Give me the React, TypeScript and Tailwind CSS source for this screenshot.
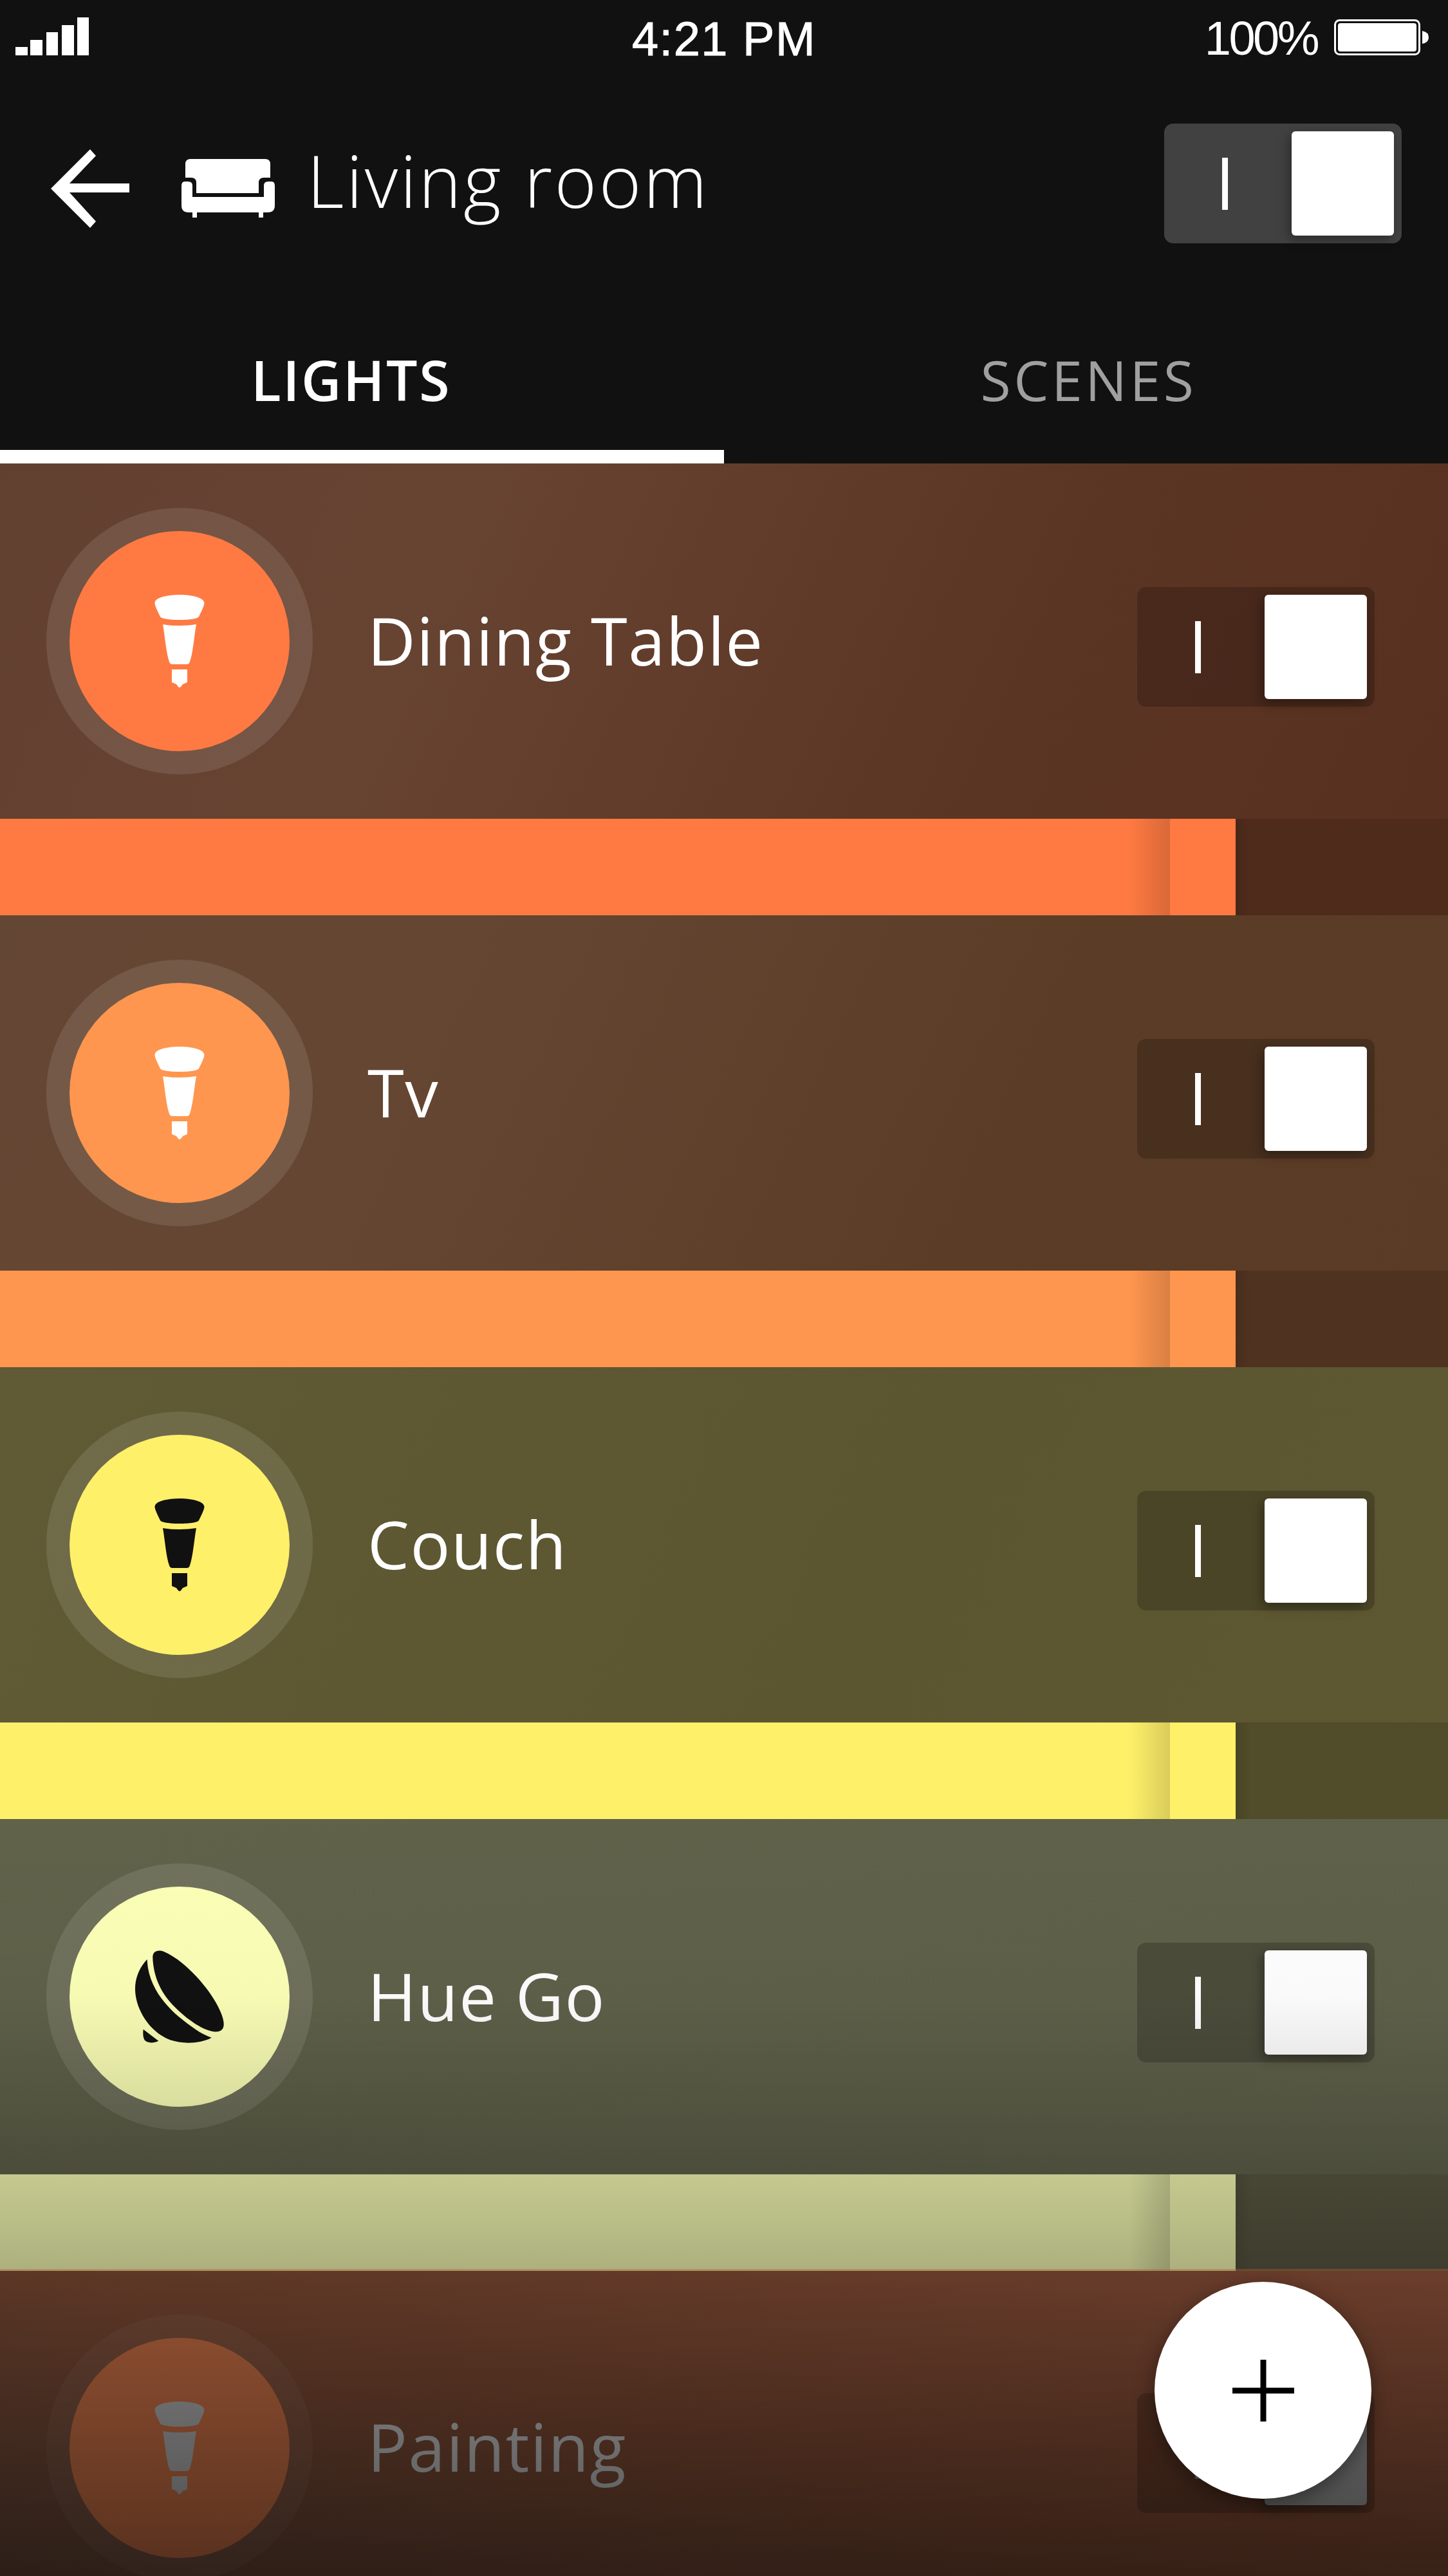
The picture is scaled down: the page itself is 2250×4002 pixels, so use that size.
const rows = [
  {
    name: "Dining Table",
    rowBg: "bg-[linear-gradient(115deg,#62402f,#674332_30%,#5b3524_70%,#583020)]",
    bar: "bg-[#ff7a42]",
    barBack: "bg-[#4f2b1c]",
    circle: "bg-[#ff7a42]",
    icon: "bulb",
    iconFill: "#ffffff",
  },
  {
    name: "Tv",
    rowBg: "bg-[linear-gradient(115deg,#644634,#654632_30%,#5b3c27_70%,#5a3b26)]",
    bar: "bg-[#ff964f]",
    barBack: "bg-[#503220]",
    circle: "bg-[#ff964f]",
    icon: "bulb",
    iconFill: "#ffffff",
  },
  {
    name: "Couch",
    rowBg: "bg-[linear-gradient(115deg,#605a35,#5c5630_60%,#5e5832)]",
    bar: "bg-[#fff06a]",
    barBack: "bg-[#514c29]",
    circle: "bg-[#fff06a]",
    icon: "bulb",
    iconFill: "#111111",
  },
  {
    name: "Hue Go",
    rowBg: "bg-[linear-gradient(170deg,#60624a,#5e6049_60%,#60624c)]",
    bar: "bg-[#f8fdb4]",
    barBack: "bg-[#5a5842]",
    circle: "bg-[#fbffb6]",
    icon: "go",
    iconFill: "#111111",
  },
];

function Bulb({ fill }: { fill: string }) {
  return (
    <svg width="78" height="144" viewBox="0 0 78 144" fill={fill}>
      <path d="M0.5 13C0.5 5 18 0 39 0S77.5 5 77.5 13C77.5 17 72 28 69 34C68 37 55 39 39 39S10 37 9 34C6 28 0.5 17 0.5 13Z" />
      <path d="M13 46Q39 50 65 46C62 62 60 90 55 104Q54 108 50 108H28Q24 108 23 104C18 90 16 62 13 46Z" />
      <path d="M27 116H51V136L44 139L41 143Q39 145 37 143L34 139L27 136Z" />
    </svg>
  );
}

function HueGo({ fill }: { fill: string }) {
  return (
    <svg width="138" height="144" viewBox="456 450 414 432" fill={fill}>
      <path d="M538 485C536 455 560 445 590 456C660 485 745 565 805 650C850 715 875 775 868 805C862 835 825 835 785 818C730 795 660 740 610 680C565 625 540 555 538 485Z" />
      <path d="M512 492C475 530 456 580 456 630C456 720 520 830 620 868C680 888 760 885 812 857C760 840 710 800 660 760C590 700 515 610 512 492Z" />
      <path d="M494 818L565 872C540 885 510 882 500 868C492 855 492 835 494 818Z" />
    </svg>
  );
}

function Toggle({ track, mark, knob }: { track: string; mark: string; knob: string }) {
  return (
    <div className={`relative flex items-center w-[369px] h-[186px] rounded-[14px] pl-[90px] ${track}`}>
      <div className={`w-[9px] h-[81px] ${mark}`} />
      <div className={`absolute right-[12px] top-[12px] w-[159px] h-[162px] rounded-[6px] shadow-[-4px_6px_18px_rgba(0,0,0,0.35)] ${knob}`} />
    </div>
  );
}

function LightRow({ row }: { row: (typeof rows)[number] }) {
  return (
    <div className="shrink-0">
      <div className={`flex items-center h-[552px] pl-[72px] pr-[114px] ${row.rowBg}`}>
        <div className="flex items-center justify-center w-[414px] h-[414px] rounded-full bg-white/10">
          <div className={`flex items-center justify-center w-[342px] h-[342px] rounded-full ${row.circle}`}>
            {row.icon === "bulb" ? <Bulb fill={row.iconFill} /> : <HueGo fill={row.iconFill} />}
          </div>
        </div>
        <div className="flex-1 pl-[85px] pb-[4px] text-[103px] tracking-[1.6px] text-white">{row.name}</div>
        <div className="mt-[18px]">
          <Toggle track="bg-black/20" mark="bg-white" knob="bg-white" />
        </div>
      </div>
      <div className={`flex h-[150px] ${row.barBack}`}>
        <div className={`flex w-[1920px] ${row.bar}`}>
          <div className="flex-1" />
          <div className="w-[64px] bg-linear-to-r from-transparent to-black/15" />
          <div className="w-[102px]" />
        </div>
        <div className="w-[24px] bg-linear-to-r from-black/10 to-transparent" />
      </div>
    </div>
  );
}

export default function App() {
  return (
    <div className="relative flex flex-col w-[2250px] h-[4002px] overflow-hidden bg-[#111111] font-['Open_Sans',sans-serif]">
      {/* status bar */}
      <div className="relative flex shrink-0 items-center justify-between h-[110px] pl-[24px] pr-[30px] pt-[10px] text-white font-['Liberation_Sans',sans-serif] text-[74px] leading-none">
        <svg width="114" height="59" viewBox="0 0 114 59" fill="#fff" className="mt-[-7px]">
          <rect x="0" y="46" width="19" height="13" />
          <rect x="23" y="35" width="19" height="24" />
          <rect x="48" y="23" width="18" height="36" />
          <rect x="72" y="12" width="19" height="47" />
          <rect x="96" y="0" width="18" height="59" />
        </svg>
        <div className="absolute left-0 right-0 top-[24px] text-center tracking-[1.5px] [-webkit-text-stroke:1px_white]">4:21 PM</div>
        <div className="flex items-center gap-[26px] mt-[-4px]">
          <span className="mt-[4px] tracking-[-3.5px]">100%</span>
          <svg width="147" height="56" viewBox="0 0 147 56">
            <rect x="1.5" y="1.5" width="131" height="53" rx="7" fill="none" stroke="#fff" strokeWidth="3" />
            <rect x="6" y="6" width="122" height="44" rx="4" fill="#fff" />
            <path d="M137 18Q147 20 147 28T137 38Z" fill="#fff" />
          </svg>
        </div>
      </div>

      {/* title row */}
      <div className="flex shrink-0 items-center h-[350px] pl-[79px] pr-[72px] text-white">
        <svg width="122" height="122" viewBox="0 0 122 122" fill="#fff" className="mt-[16px]">
          <polygon points="0,61 61,0 70,10 29,53 122,53 122,67 29,67 70,112 61,122" />
        </svg>
        <svg width="145" height="91" viewBox="0 0 145 91" fill="#fff" className="ml-[81px] mt-[14px]">
          <path d="M14 0H130Q138 0 138 8V29H128Q120 29 120 37V53H23V37Q23 29 15 29H6V8Q6 0 14 0Z" />
          <path d="M5 35H10Q17 35 17 41V59H128V41Q128 35 135 35H140Q145 35 145 42V72Q145 83 134 83H11Q0 83 0 72V42Q0 35 5 35Z" />
          <rect x="17" y="83" width="7" height="8" />
          <rect x="120" y="83" width="7" height="8" />
        </svg>
        <div className="flex-1 pl-[50px] pb-[10px] text-[112px] font-light tracking-[3.5px] leading-none">Living room</div>
        <Toggle track="bg-[#414141]" mark="bg-white" knob="bg-white" />
      </div>

      {/* tabs */}
      <div className="flex shrink-0 h-[260px] text-[86px]">
        <div className="flex items-center justify-center w-[1125px] border-b-[21px] border-white pt-[20px] pr-[34px] font-semibold tracking-[2.5px] text-white">
          LIGHTS
        </div>
        <div className="flex items-center justify-center w-[1125px] pb-[1px] pl-[8px] tracking-[4.5px] text-[#a0a0a0]">
          SCENES
        </div>
      </div>

      {/* list */}
      <div className="flex flex-col shrink-0">
        {rows.map((row) => (
          <LightRow key={row.name} row={row} />
        ))}
        <div className="flex shrink-0 items-center h-[549px] -mt-[3px] box-content border-t-[3px] border-[rgba(255,140,85,0.4)] bg-clip-padding pl-[72px] pr-[114px] bg-[linear-gradient(195deg,#9a583f,#864f36_50%,#6b4c3d)]">
          <div className="flex items-center justify-center w-[414px] h-[414px] rounded-full bg-white/5">
            <div className="flex items-center justify-center w-[342px] h-[342px] rounded-full bg-[#d9784a]">
              <Bulb fill="#bdbdbd" />
            </div>
          </div>
          <div className="flex-1 pl-[85px] pb-[4px] text-[103px] tracking-[1.6px] text-[#d0d0d0]">Painting</div>
          <div className="mt-[16px]">
            <Toggle track="bg-black/20" mark="bg-[#aaaaaa]" knob="bg-[#a8a8a8]" />
          </div>
        </div>
      </div>

      {/* dim toward the bottom of the screen */}
      <div className="absolute left-0 right-0 top-[2826px] h-[1176px] bg-[linear-gradient(transparent,rgba(0,0,0,0.02)_274px,rgba(0,0,0,0.3)_699px,rgba(0,0,0,0.6))]" />

      {/* add button */}
      <div className="absolute left-[1794px] top-[3545px] flex items-center justify-center w-[337px] h-[337px] rounded-full bg-white shadow-[0_8px_30px_rgba(0,0,0,0.4)]">
        <svg width="96" height="96" viewBox="0 0 96 96" fill="#000">
          <rect x="0" y="43.5" width="96" height="9" />
          <rect x="43.5" y="0" width="9" height="96" />
        </svg>
      </div>
    </div>
  );
}
